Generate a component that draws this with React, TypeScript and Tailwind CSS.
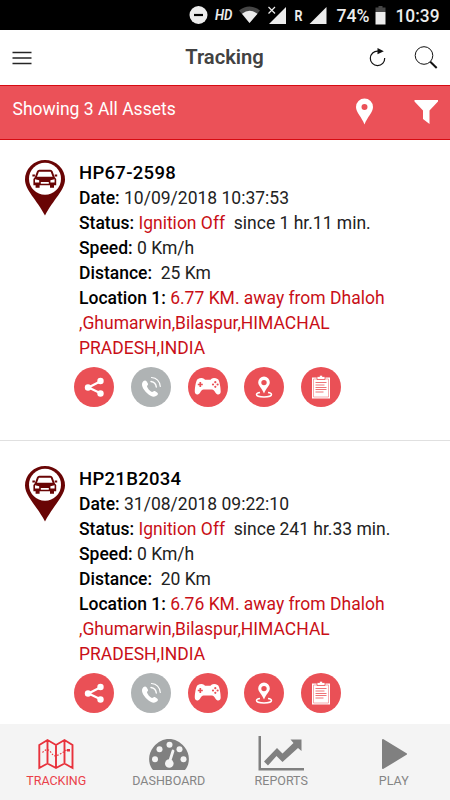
import React from 'react';

const assets = [
  {
    name: 'HP67-2598',
    date: '10/09/2018 10:37:53',
    since: 'since 1 hr.11 min.',
    speed: '0 Km/h',
    distance: '25 Km',
    away: '6.77 KM. away from Dhaloh',
  },
  {
    name: 'HP21B2034',
    date: '31/08/2018 09:22:10',
    since: 'since 241 hr.33 min.',
    speed: '0 Km/h',
    distance: '20 Km',
    away: '6.76 KM. away from Dhaloh',
  },
];

const StatusBar = () => (
  <div className="h-[30px] shrink-0 bg-black text-[#ececec] flex justify-end">
    <svg width="270" height="30" viewBox="0 0 270 30" fill="currentColor">
      <circle cx="18.5" cy="15" r="9" />
      <path d="M14 15h9" stroke="#000" strokeWidth="2.2" />
      <text x="35" y="20" fontSize="15" fontWeight="600" fontStyle="italic" textLength="17.5" lengthAdjust="spacingAndGlyphs">HD</text>
      <path d="M59 10.5Q69.5 2.5 80 10.5L69.5 23z" fill="#464646" />
      <path d="M62 13.8Q69.5 7.5 77.5 13.8L69.5 23z" />
      <path d="M106 7v17H89z" />
      <path d="M87.5 6 96 14.5M96 6 87.5 14.5" stroke="#000" strokeWidth="4" />
      <path d="M88.5 7 95 13.5M95 7 88.5 13.5" stroke="currentColor" strokeWidth="1.2" />
      <text x="114.5" y="20.5" fontSize="15" fontWeight="700" textLength="8" lengthAdjust="spacingAndGlyphs">R</text>
      <path d="M146.5 7v17h-17z" />
      <text x="156.5" y="22" fontSize="18" fontWeight="500" textLength="33" lengthAdjust="spacingAndGlyphs">74%</text>
      <path d="M195.5 12V7.5h3V6h4v1.5h3V12z" fill="#464646" />
      <path d="M195.5 12h10v12.5h-10z" />
      <text x="215.5" y="22" fontSize="18.5" fontWeight="500" textLength="44" lengthAdjust="spacingAndGlyphs">10:39</text>
    </svg>
  </div>
);

const CarPin = () => (
  <svg className="w-[40px] h-[56px] shrink-0" viewBox="0 0 40 56">
    <path d="M20 0A20 19.5 0 0 0 0 19.5C0 30 12 40 20 55.5 28 40 40 30 40 19.5A20 19.5 0 0 0 20 0z" fill="#690505" />
    <circle cx="20" cy="18.7" r="16" fill="#fff" />
    <path
      d="M9.8 17.2 12 11.3Q12.6 9.7 14.3 9.7h11q1.7 0 2.3 1.600L29.800 17.200l1.400 1.800v6.300H29v2.500h-4v-2.500H14.600v2.500h-4v-2.500H8.400V19zM12 16.800h15.600L25.700 11.700H13.900z"
      fill="#690505"
      fillRule="evenodd"
    />
    <path d="M7.4 15.5h2.500M29.700 15.5h2.500" stroke="#690505" strokeWidth="1.8" />
    <path d="M10 19.3l4.200 1v2.200H10zM29.6 19.3l-4.200 1v2.200h4.200zM15.8 22h8v1.800h-8z" fill="#fff" />
  </svg>
);

const ShareIcon = () => (
  <svg className="size-10" viewBox="0 0 40 40" fill="#fff">
    <path d="M27 14 14.5 20.5 27 26.5" fill="none" stroke="#fff" strokeWidth="2.2" />
    <circle cx="26.5" cy="14" r="3.2" />
    <circle cx="14" cy="20.5" r="3.2" />
    <circle cx="26.5" cy="26.5" r="3.2" />
  </svg>
);

const CallIcon = () => (
  <svg className="size-10" viewBox="0 0 40 40" fill="none" stroke="#fff" strokeLinecap="round">
    <path
      d="M12.3 14.3c1.2-1.3 2.5-1.2 3.4.2l1.2 2c.8 1.4-1.2 2-.9 3.1.6 2 2.8 4.6 4.9 5.3 1.1.4 1.5-1.5 3-.8l2.2 1.3c1.4 1 .9 2.2-.3 3.2-2.3 2-6.1 1.1-9.6-2.3-4.4-4.2-6.9-9-3.9-12z"
      fill="#fff"
      stroke="none"
    />
    <path d="M20 14.5c3 .4 5 2.6 5.3 5.5" strokeWidth="1.4" />
    <path d="M20.5 10.5c5 .4 8.2 4 8.8 9" strokeWidth="1.2" />
  </svg>
);

const GamepadIcon = () => (
  <svg className="size-10" viewBox="0 0 40 40">
    <path d="M9.5 12.3q3.5-2 6.5-.6l1 1h5.5l1-1q3-1.4 6.5.6c1.6 1.5 2.7 8.5 2.7 12.5-.2 3.5-3.700 3.500-5.200 1-1.300-2.300-2.300-3.300-3.500-3.300h-8.500c-1.200 0-2.200 1-3.500 3.300-1.500 2.500-5 2.500-5.200-1 0-4 1.100-11 2.700-12.500z" fill="#fff" />
    <path d="M9.8 17.5h5M12.3 15v5" stroke="#ea5056" strokeWidth="1.7" />
    <g fill="#ea5056">
      <circle cx="27.3" cy="15.2" r="1.1" />
      <circle cx="27.3" cy="19.8" r="1.1" />
      <circle cx="25" cy="17.5" r="1.1" />
      <circle cx="29.6" cy="17.5" r="1.1" />
    </g>
  </svg>
);

const PlaceIcon = () => (
  <svg className="size-10" viewBox="0 0 40 40">
    <path d="M16 25.5c-2.6.3-3.5 1-3.5 2 0 1.3 3 2.5 7.5 2.5s7.5-1.2 7.5-2.500c0-1-1-1.700-3.500-2" fill="none" stroke="#fff" strokeWidth="1.5" />
    <path d="M20 9.5a5.8 5.8 0 0 0-5.8 5.8c0 3.5 3.4 5.5 5.8 11.2 2.4-5.7 5.8-7.7 5.8-11.2A5.8 5.8 0 0 0 20 9.5zm0 3.4a2.7 2.7 0 1 1 0 5.4 2.7 2.7 0 0 1 0-5.4z" fill="#fff" fillRule="evenodd" />
  </svg>
);

const ReportIcon = () => (
  <svg className="size-10" viewBox="0 0 40 40">
    <path d="M11 10.5h18v21H11z" fill="#fff" />
    <path d="M12.5 12h15v18h-15z" fill="none" stroke="#f0888c" strokeWidth=".7" />
    <path d="M16 12.5v-3h2.500q0-1.500 1.500-1.500t1.500 1.500H24v3z" fill="#fff" stroke="#ea5056" strokeWidth=".8" />
    <path d="M14.5 15.5h11M14.5 18h9M14.5 20.5h11M14.5 22.5h11M14.5 25h8" stroke="#ea5056" strokeWidth=".8" />
  </svg>
);

const AssetCard = ({ asset }: { asset: (typeof assets)[number] }) => (
  <div className="shrink-0 pl-[25px] pb-[33px] flex">
    <div className="pt-[20px]">
      <CarPin />
    </div>
    <div className="pt-[21px] pl-[14px]">
      <div className="text-[17.5px] leading-[25px] text-[#222] whitespace-nowrap">
        <p className="font-medium text-black text-[18.5px] tracking-[0.3px]">{asset.name}</p>
        <p><b className="font-medium text-black">Date:</b> {asset.date}</p>
        <p>
          <b className="font-medium text-black">Status:</b> <span className="text-[#c90f17]">Ignition Off</span>
          &nbsp; {asset.since}
        </p>
        <p><b className="font-medium text-black">Speed:</b> {asset.speed}</p>
        <p><b className="font-medium text-black">Distance:</b>&nbsp; {asset.distance}</p>
        <p><b className="font-medium text-black">Location 1:</b> <span className="text-[#c90f17]">{asset.away}</span></p>
        <p className="text-[#c90f17]">,Ghumarwin,Bilaspur,HIMACHAL</p>
        <p className="text-[#c90f17]">PRADESH,INDIA</p>
      </div>
      {/* actions */}
      <div className="flex gap-[16.8px] mt-1.5 -ml-[5px]">
        <button className="size-10 rounded-full bg-[#ea5056]"><ShareIcon /></button>
        <button className="size-10 rounded-full bg-[#afb3b4]"><CallIcon /></button>
        <button className="size-10 rounded-full bg-[#ea5056]"><GamepadIcon /></button>
        <button className="size-10 rounded-full bg-[#ea5056]"><PlaceIcon /></button>
        <button className="size-10 rounded-full bg-[#ea5056]"><ReportIcon /></button>
      </div>
    </div>
  </div>
);

const MapIcon = () => (
  <svg className="h-9 w-[48px]" viewBox="0 0 48 36" fill="none" stroke="#e8323c">
    <path d="M7.3 9 15.5 4 24 9 32.5 4 40.5 9V32L32.5 27.5 24 32 15.5 27.5 7.3 32zM15.5 4v23.5M24 9V32M32.5 4v23.5" strokeWidth="1.9" />
    <path d="M10.5 16.5Q15.5 11 19 16.5T27 18.5Q30 17 32 15.5T35 14" strokeWidth="1.2" strokeDasharray="1.5 1.5" />
    <path d="M35 13h3v2.5h-3z" fill="#e8323c" stroke="none" />
  </svg>
);

const GaugeIcon = () => (
  <svg className="h-9 w-[48px]" viewBox="0 0 48 36">
    <path d="M8 34C2.500 27.500 3 17.500 8.500 11 13 5.500 18.500 3 24 3s11 2.500 15.500 8C45 17.500 45.500 27.500 40 34z" fill="#808080" />
    <g fill="#f4f4f4">
      <circle cx="24.5" cy="8.8" r="3" />
      <circle cx="14.5" cy="13.2" r="3" />
      <circle cx="34.5" cy="13.2" r="3" />
      <circle cx="10" cy="23.2" r="3" />
      <circle cx="38.5" cy="23.2" r="3" />
      <circle cx="24.3" cy="27.5" r="4.3" />
    </g>
    <path d="M24.5 26 28 15" stroke="#f4f4f4" strokeWidth="2.8" strokeLinecap="round" />
  </svg>
);

const ChartIcon = () => (
  <svg className="h-9 w-[48px]" viewBox="0 0 48 36" fill="#808080">
    <path d="M1.5 0H4V32H47V34.5H1.5z" />
    <path d="M7 25.5 20 12l5.5 5.5L36.5 7l-3-3.5H44.5V15l-3.5-3L25.500 26 19.500 20 11 29.500z" />
  </svg>
);

const PlayIcon = () => (
  <svg className="h-9 w-[48px]" viewBox="0 0 48 36">
    <path d="M13 4 36 18 13 32z" fill="#808080" stroke="#808080" strokeWidth="2" strokeLinejoin="round" />
  </svg>
);

const App = () => {
  return (
    <div className="w-[450px] h-[800px] overflow-hidden bg-white flex flex-col font-['Roboto',sans-serif]">
      <StatusBar />
      {/* header */}
      <div className="h-[55px] shrink-0 flex items-center justify-between px-3">
        <svg width="58" height="30" viewBox="0 0 58 30" stroke="#252525" strokeWidth="1.6">
          <path d="M.5 9.5h19M.5 15h19M.5 20.5h19" />
        </svg>
        <h1 className="pl-[11px] text-[20.2px] leading-[24px] pb-[2px] font-semibold text-[#424242]">Tracking</h1>
        <svg width="70" height="30" viewBox="0 0 70 30" fill="none" stroke="#111">
          <path d="M10 8.2A7.2 7.2 0 1 0 16.7 15" strokeWidth="1.2" />
          <path d="M9.5 5v6.3L15.8 8.2z" fill="#111" stroke="none" />
          <circle cx="56" cy="12.5" r="8.8" strokeWidth="1" />
          <path d="m62.3 18.8 6.4 6.2" strokeWidth="2" />
        </svg>
      </div>
      {/* filter bar */}
      <div className="h-[55px] shrink-0 bg-[#eb5158] border-y border-[#d60b12] flex justify-between text-white">
        <p className="pl-[12.5px] pt-[11px] text-[17.5px] leading-[24px]">Showing 3 All Assets</p>
        <svg width="100" height="53" viewBox="350 86 100 53" fill="#fff">
          <path d="M364.5 98.5a8.5 8.5 0 0 0-8.5 8.5c0 5.5 5.8 10 8.5 17.5 2.7-7.5 8.5-12 8.5-17.5a8.5 8.5 0 0 0-8.5-8.5zm0 5.5a3 3 0 1 1 0 6 3 3 0 0 1 0-6z" fillRule="evenodd" />
          <path d="M414.5 100h23.5v1.5L429.5 110.5V124L423 119v-8.5l-8.5-9z" />
        </svg>
      </div>
      {/* list */}
      <div className="flex-1 min-h-0 overflow-hidden flex flex-col divide-y divide-[#e0e0e0]">
        {assets.map((asset, index) => (
          <div key={asset.name} className={index > 0 ? 'pt-[5px]' : ''}>
            <AssetCard asset={asset} />
          </div>
        ))}
      </div>
      {/* bottom tabs */}
      <div className="h-[76px] shrink-0 bg-[#f4f4f4] grid grid-cols-4 pt-[12px] text-[12.5px] leading-[18px] text-[#858585]">
        <div className="flex flex-col items-center text-[#ea4049]"><MapIcon />TRACKING</div>
        <div className="flex flex-col items-center"><GaugeIcon />DASHBOARD</div>
        <div className="flex flex-col items-center"><ChartIcon />REPORTS</div>
        <div className="flex flex-col items-center"><PlayIcon />PLAY</div>
      </div>
    </div>
  );
};

export default App;
